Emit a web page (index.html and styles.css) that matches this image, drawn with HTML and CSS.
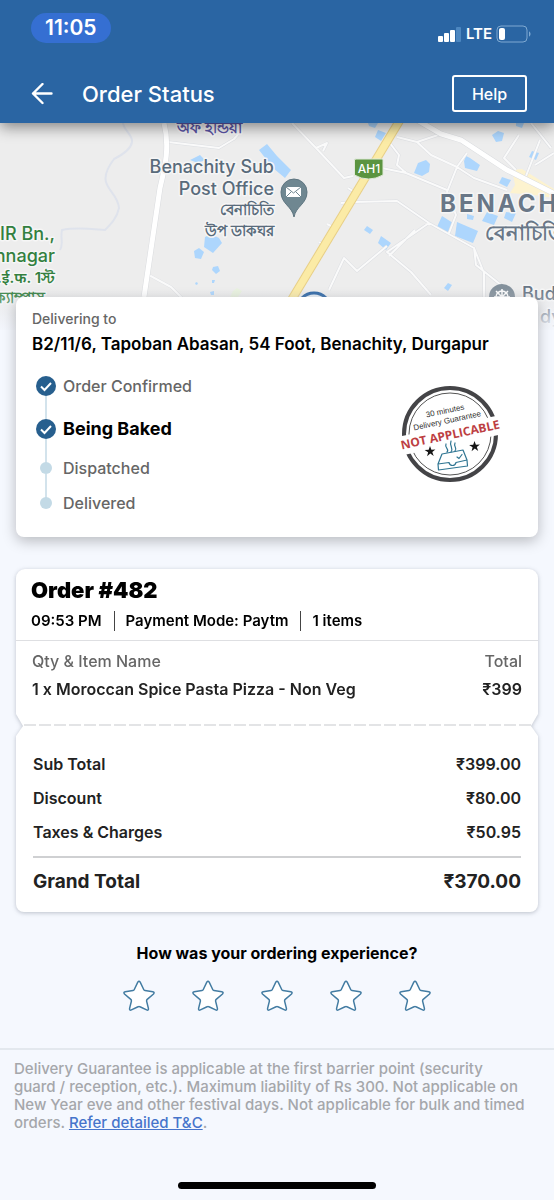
FILE: index.html
```html
<!DOCTYPE html>
<html lang="en">
<head>
<meta charset="utf-8">
<meta name="viewport" content="width=device-width, initial-scale=1">
<title>Order Status</title>
<link rel="stylesheet" href="styles.css">
</head>
<body>
<header class="top">
  <div class="status-bar">
    <span class="clock">11:05</span>
    <div class="signals">
      <svg width="24" height="18" viewBox="0 0 24 18" aria-hidden="true">
        <g fill="#fff"><rect x="0" y="11" width="5" height="6" rx="1"/><rect x="6" y="8" width="5" height="9" rx="1"/><rect x="12" y="5" width="5" height="12" rx="1"/></g>
        <rect x="18" y="2" width="5" height="15" rx="1" fill="#4d87c0"/>
      </svg>
      <span class="network">LTE</span>
      <svg width="35" height="18" viewBox="0 0 35 18" aria-hidden="true">
        <rect x="1" y="1" width="30" height="16" rx="4" fill="none" stroke="#7ea9d2" stroke-width="1"/>
        <rect x="3" y="3" width="6" height="12" rx="2" fill="#fff"/>
        <path d="M33 6.500v5c2-.5 2-4.500 0-5z" fill="#7ea9d2"/>
      </svg>
    </div>
  </div>
  <div class="app-bar">
    <button class="back" type="button" aria-label="Back">
      <svg width="22" height="22" viewBox="0 0 22 22" fill="none" stroke="#fff" stroke-width="2.400" stroke-linecap="round" stroke-linejoin="round"><path d="M20.500 10.500H2M11.500 1 2 10.500l9.500 9.500"/></svg>
    </button>
    <h1 class="title">Order Status</h1>
    <button class="help" type="button">Help</button>
  </div>
</header>

<main>
  <div class="map">
    <svg class="map-art" viewBox="0 123 554 207" preserveAspectRatio="xMidYMin slice" aria-label="Map of Benachity" role="img">
      <rect x="-600" y="100" width="1800" height="300" fill="#ededed"/>
      <g class="road-faint">
        <path d="M123 123c1 8 10 12 9 19s-8 12-18 17c-6 8-10 16-8 23 3 10 12 14 13 26-2 10-8 16-14 22-14-1-28-3-43 0-2 8 2 14-2 20"/>
      </g>
      <g class="water">
        <path d="M259 150l8-6 10 12 14 14-6 8-12-10zM190 160l10-5 5 5-7 3zM205 237l6-3 8 4 3 5-9 10-9-6zM194 251l5-3 5 4-3 7-6-1zM213 267l5-1 2 5-4 3-4-4zM196 282l2 1-1 2-2-1zM212 280l3 0-1 3-2 0zM210 292l4-1 0 4-3 0z"/>
        <path d="M368 123h10l-3 5-6-2zM378 130l8 3-5 8-6-4zM418 163l8-3 4 4-1 8-7 4-8-3zM466 156l4 2 10 7-3 6-12-3-1-7zM498 131l6 2-2 8-6 1-4-7zM516 123h8l-2 5-6-2zM532 151l7 2-3 7-7-3zM502 177l9 3-4 7-8-4zM442 216l11 7-3 11-13-7zM457 222l21 9-5 12-18-7zM487 212l11 4-4 9-12-4zM467 214l7 2-1 4-6-1zM506 212l10 1-4 9-8-4zM367 226l6 4-3 4-6-4zM381 236l10 7-5 7-8-7zM448 283l4 2-4 6-4-3z"/>
      </g>
      <path fill="#e9f2df" d="M233 291l4-3 5 3-4 6h-8z"/>
      <path fill="#fdf3cf" d="M512 170l10-1 32 20v9l-20-3-24-2 5-8z"/>
      <g class="road-edge"><path d="M292 123l24 25 13 14 15 16 9-2M316 148l11-5-4 8M397 137l20 5 14 13 26 12 17 11 33 12M389 142l10 13-2 10 9 8 41 17M382 168l24 5M354 202l43-1 32 22 45 25 2 17 25 20M429 223l-42 29 24 20 20 23M387 246l-30 25-13-13-15 32M467 153l-10 14-10 25 9 23-7 18M474 248l10 25v24M531 123l20 25M519 135l-15 23 12 12M540 140l-14 36M417 142l24-8M168 142l51 6 15-9 6-7M147 274l24 13 12 12M415 230l-26 26M341 203l13-1M348 188l8 5M327 224l8 4M319 242l7 4M535 165l19-12"/></g>
      <g class="road-line"><path d="M292 123l24 25 13 14 15 16 9-2M316 148l11-5-4 8M397 137l20 5 14 13 26 12 17 11 33 12M389 142l10 13-2 10 9 8 41 17M382 168l24 5M354 202l43-1 32 22 45 25 2 17 25 20M429 223l-42 29 24 20 20 23M387 246l-30 25-13-13-15 32M467 153l-10 14-10 25 9 23-7 18M474 248l10 25v24M531 123l20 25M519 135l-15 23 12 12M540 140l-14 36M417 142l24-8M168 142l51 6 15-9 6-7M147 274l24 13 12 12M415 230l-26 26M341 203l13-1M348 188l8 5M327 224l8 4M319 242l7 4M535 165l19-12"/></g>
      <path class="road-main-edge" d="M164 123c6 24 1 44-4 65l-16 109M417 120l24 14 20 6 46 30 60 30"/>
      <path class="road-main" d="M164 123c6 24 1 44-4 65l-16 109M417 120l24 14 20 6 46 30 60 30"/>
      <path d="M403 115L286 309" fill="none" stroke="#e8cf86" stroke-width="9"/>
      <path d="M403 115L286 309" fill="none" stroke="#fbeba6" stroke-width="7"/>
      <path d="M355 159h27q1 0 1 1v15q-7 4-14.500 4t-14-4v-15q0-1 1-1z" fill="#5b9440" stroke="#dfe9d8"/>
      <text x="369" y="173" class="shield">AH1</text>
      <path d="M294 217c-2-11-13-13-13-25a13 13 0 0 1 26 0c0 12-11 14-13 25z" fill="#6f8791" stroke="#5f7681"/>
      <path d="M286 187h15v10h-15z" fill="#fff"/>
      <path d="M286 187l7.500 6 7.500-6M286 197l5-5M301 197l-5-5" fill="none" stroke="#6f8791"/>
      <circle cx="502" cy="297" r="13" fill="#84919c"/>
      <g fill="none" stroke="#fff" stroke-width="1.500"><circle cx="502" cy="297" r="6"/><path d="M494 297h16M502 289v16M496 291l12 12M508 291l-12 12"/></g>
      <circle cx="314" cy="310" r="17" fill="#e8f0f7" stroke="#2b65a5" stroke-width="3"/>
      <g class="label" text-anchor="end">
        <text x="242" y="133" class="label-small" fill="#5b55a6">অফ ইন্ডিয়া</text>
        <g fill="#596b7b">
          <text x="274" y="173" class="label-big">Benachity Sub</text>
          <text x="274" y="195" class="label-big">Post Office</text>
          <text x="274" y="215" class="label-small">বেনাচিতি</text>
          <text x="274" y="236" class="label-small">উপ ডাকঘর</text>
        </g>
        <g fill="#33803f">
          <text x="55" y="240" class="label-big">IR Bn.,</text>
          <text x="55" y="262" class="label-big">nnagar</text>
          <text x="55" y="283" class="label-small">फ.ई.फ. 1স্ট</text>
          <text x="45" y="303" class="label-small">ক্যাম্পাস</text>
        </g>
      </g>
      <g class="label" fill="#697787">
        <text x="440" y="212" class="label-town">BENACHITY</text>
        <text x="485" y="240" class="label-local">বেনাচিতি</text>
        <text x="522" y="300" class="label-big">Buddha</text>
        <text x="540" y="323" class="label-big">dyalaya</text>
      </g>
    </svg>
  </div>

  <section class="card delivery">
    <p class="muted">Delivering to</p>
    <p class="address">B2/11/6, Tapoban Abasan, 54 Foot, Benachity, Durgapur</p>
    <div class="progress">
      <ol class="steps">
        <li class="step step-done"><span class="mark"><svg viewBox="0 0 20 20" width="20" height="20"><circle cx="10" cy="10" r="10" fill="#275f8e"/><path d="M5 10.500l3.500 3.500L15 7" fill="none" stroke="#fff" stroke-width="2"/></svg></span>Order Confirmed</li>
        <li class="step step-done step-current"><span class="mark"><svg viewBox="0 0 20 20" width="20" height="20"><circle cx="10" cy="10" r="10" fill="#275f8e"/><path d="M5 10.500l3.500 3.500L15 7" fill="none" stroke="#fff" stroke-width="2"/></svg></span>Being Baked</li>
        <li class="step step-next"><span class="mark"><span class="dot"></span></span>Dispatched</li>
        <li class="step step-next"><span class="mark"><span class="dot"></span></span>Delivered</li>
      </ol>
      <svg class="stamp" width="100" height="100" viewBox="0 0 100 100" role="img" aria-label="30 minutes delivery guarantee not applicable">
        <circle cx="50" cy="50" r="46" fill="none" stroke="#444447" stroke-width="4"/>
        <circle cx="50" cy="50" r="41" fill="none" stroke="#555" stroke-width="1"/>
        <g transform="rotate(-12 50 50)">
          <rect x="-2" y="42" width="104" height="19" fill="#fff"/>
          <text x="50" y="29" class="stamp-small">30 minutes</text>
          <text x="50" y="39" class="stamp-small">Delivery Guarantee</text>
          <text x="50" y="55" class="stamp-big">NOT APPLICABLE</text>
        </g>
        <g fill="#161616"><path d="M30 62l1.400 3.700 4-.2-3.100 2.500 1.400 3.900-3.400-2.300-3.200 2.600 1-4-3.500-2.100 4.100-.3z"/><path d="M74.500 57l1.400 3.700 4-.2-3.100 2.500 1.400 3.900-3.400-2.300-3.200 2.600 1-4-3.500-2.100 4.100-.3z"/></g>
        <g fill="none" stroke="#2f7592" stroke-width="1.200" stroke-linejoin="round" stroke-linecap="round">
          <path d="M42 70l21-4 4 10 .5 6-29 4-.5-6zM38 80l11-1.500c1 4 6 4 7 0L67 76M57 73l2 1.500 3-4"/>
          <path d="M47 68c3-3-3-4-1-8M51 68c3-4-2-6 0-11M55 67c3-3-2-4 0-8"/>
        </g>
      </svg>
    </div>
  </section>

  <section class="ticket">
    <div class="stub">
      <div class="stub-body">
        <div class="order-head">
          <h2 class="order-number">Order #482</h2>
          <p class="facts"><span>09:53 PM</span><span>Payment Mode: Paytm</span><span>1 items</span></p>
        </div>
        <table class="items">
          <thead><tr><th scope="col">Qty &amp; Item Name</th><th scope="col">Total</th></tr></thead>
          <tbody><tr><td>1 x Moroccan Spice Pasta Pizza - Non Veg</td><td>₹399</td></tr></tbody>
        </table>
      </div>
    </div>
    <div class="bill">
      <div class="bill-body">
        <table class="totals">
          <tbody>
            <tr><th scope="row">Sub Total</th><td>₹399.00</td></tr>
            <tr><th scope="row">Discount</th><td>₹80.00</td></tr>
            <tr><th scope="row">Taxes &amp; Charges</th><td>₹50.95</td></tr>
          </tbody>
          <tfoot><tr><th scope="row">Grand Total</th><td>₹370.00</td></tr></tfoot>
        </table>
      </div>
    </div>
  </section>

  <section class="rating">
    <h2 class="question">How was your ordering experience?</h2>
    <div class="stars">
      <button type="button" class="star" aria-label="1 star"><svg viewBox="0 0 34 32" width="34" height="32"><path d="M15.800 2.200q1.200-2 2.400 0L21.700 9.500q.4.900 1.300 1l7.800 1.200q2.200.5.700 2.300l-6.300 5.400q-.8.700-.6 1.700l1.800 7.300q.3 2.500-1.800 1.500L18 26.800q-1-.5-2 0l-6.600 3.100q-2.100 1-1.800-1.500l1.800-7.300q.2-1-.6-1.700L2.500 14q-1.500-1.800.7-2.300L11 10.500q.9-.1 1.300-1z"/></svg></button>
      <button type="button" class="star" aria-label="2 stars"><svg viewBox="0 0 34 32" width="34" height="32"><path d="M15.800 2.200q1.200-2 2.400 0L21.700 9.500q.4.900 1.300 1l7.800 1.200q2.200.5.700 2.300l-6.300 5.400q-.8.700-.6 1.700l1.800 7.300q.3 2.500-1.800 1.500L18 26.800q-1-.5-2 0l-6.600 3.100q-2.100 1-1.800-1.500l1.800-7.300q.2-1-.6-1.700L2.500 14q-1.500-1.800.7-2.300L11 10.500q.9-.1 1.300-1z"/></svg></button>
      <button type="button" class="star" aria-label="3 stars"><svg viewBox="0 0 34 32" width="34" height="32"><path d="M15.800 2.200q1.200-2 2.400 0L21.700 9.500q.4.900 1.300 1l7.800 1.200q2.200.5.700 2.300l-6.300 5.400q-.8.700-.6 1.700l1.800 7.300q.3 2.500-1.800 1.500L18 26.800q-1-.5-2 0l-6.600 3.100q-2.100 1-1.800-1.500l1.800-7.300q.2-1-.6-1.700L2.500 14q-1.500-1.800.7-2.300L11 10.500q.9-.1 1.300-1z"/></svg></button>
      <button type="button" class="star" aria-label="4 stars"><svg viewBox="0 0 34 32" width="34" height="32"><path d="M15.800 2.200q1.200-2 2.400 0L21.700 9.500q.4.900 1.300 1l7.800 1.200q2.200.5.700 2.300l-6.300 5.400q-.8.700-.6 1.700l1.800 7.300q.3 2.500-1.800 1.500L18 26.800q-1-.5-2 0l-6.600 3.100q-2.100 1-1.800-1.500l1.800-7.300q.2-1-.6-1.700L2.500 14q-1.500-1.800.7-2.300L11 10.500q.9-.1 1.300-1z"/></svg></button>
      <button type="button" class="star" aria-label="5 stars"><svg viewBox="0 0 34 32" width="34" height="32"><path d="M15.800 2.200q1.200-2 2.400 0L21.700 9.500q.4.900 1.300 1l7.800 1.200q2.200.5.700 2.300l-6.300 5.400q-.8.700-.6 1.700l1.800 7.300q.3 2.500-1.800 1.500L18 26.800q-1-.5-2 0l-6.600 3.100q-2.100 1-1.800-1.500l1.800-7.300q.2-1-.6-1.700L2.500 14q-1.500-1.800.7-2.300L11 10.500q.9-.1 1.300-1z"/></svg></button>
    </div>
  </section>
</main>

<footer class="terms">
  <p class="terms-text">Delivery Guarantee is applicable at the first barrier point (security guard&nbsp;/ reception, etc.). Maximum liability of Rs 300. Not applicable on New Year eve and other festival days. Not applicable for bulk and timed orders. <a href="#terms">Refer detailed T&amp;C</a>.</p>
  <div class="home-indicator"></div>
</footer>
</body>
</html>
```

FILE: styles.css
```css
* { box-sizing: border-box; }

body {
  margin: 0;
  min-height: 100vh;
  display: flex;
  flex-direction: column;
  background: #f5f8fe;
  color: #000;
  font-family: Inter, "Noto Sans", sans-serif;
  font-size: 16px;
  font-weight: 500;
  line-height: 20px;
}

h1, h2, p, ol { margin: 0; padding: 0; }
button { font: inherit; color: inherit; background: none; border: 0; padding: 0; cursor: pointer; }
svg { display: block; flex: none; }

/* Header */
.top {
  position: relative;
  z-index: 1;
  background: #2a65a3;
  color: #fff;
  box-shadow: 0 4px 14px rgba(0, 0, 0, .45);
}
.status-bar {
  display: flex;
  justify-content: space-between;
  align-items: flex-start;
  padding: 13px 23px 0 31px;
  height: 64px;
}
.clock {
  padding: 5px 14px;
  border-radius: 15px;
  background: #356fd2;
  font-size: 21px;
  font-weight: 600;
}
.signals { display: flex; align-items: center; gap: 4px; padding-top: 12px; }
.network { font-size: 15px; font-weight: 600; line-height: 18px; }
.app-bar {
  display: flex;
  align-items: center;
  padding: 11px 27px 11px 31px;
}
.title { flex: 1; margin-left: 29px; font-size: 22px; font-weight: 500; line-height: 28px; }
.help {
  width: 75px;
  height: 37px;
  border: 2px solid #fff;
  border-radius: 3px;
  font-size: 16px;
}

/* Map */
.map { position: relative; height: 207px; overflow: hidden; }
.map-art { width: 100%; height: 100%; }
.map::after {
  content: "";
  position: absolute;
  inset: auto 0 0;
  height: 42px;
  background: linear-gradient(rgba(238, 240, 245, 0), rgba(240, 243, 250, .5) 60%, #f3f6fc);
}
.road-faint { fill: none; stroke: #dfe3ec; stroke-width: 2; }
.water { fill: #add6fd; }
.road-edge { fill: none; stroke: #dcdee2; stroke-width: 3; stroke-linejoin: round; }
.road-line { fill: none; stroke: #fafafa; stroke-width: 2; stroke-linejoin: round; }
.road-main-edge { fill: none; stroke: #dadcdf; stroke-width: 6; }
.road-main { fill: none; stroke: #fff; stroke-width: 5; }
.label text { stroke: #f6f6f6; stroke-width: 3px; stroke-linejoin: round; paint-order: stroke; }
.label-big { font-size: 18px; }
.label-small { font-size: 15px; font-weight: 600; }
.label-local { font-size: 21px; font-weight: 600; }
.label-town { font-size: 24px; font-weight: 700; letter-spacing: 3px; }
.shield { fill: #fff; font-size: 12px; text-anchor: middle; }

/* Delivery card */
.card {
  position: relative;
  margin: -33px 16px 0;
  padding: 12px 16px 15px;
  background: #fff;
  border-radius: 8px;
  box-shadow: 0 4px 14px rgba(0, 0, 0, .25);
}
.muted { color: #666; font-size: 14px; }
.address { margin-top: 5px; font-size: 17px; font-weight: 600; }
.progress {
  display: flex;
  justify-content: space-between;
  align-items: flex-start;
  padding: 22px 22px 0 4px;
}
.steps { list-style: none; }
.step {
  position: relative;
  display: flex;
  align-items: flex-start;
  gap: 7px;
  color: #666;
}
.step-done { height: 43px; }
.step-current { height: 36px; color: #000; font-size: 18px; font-weight: 700; }
.step-next { margin-top: 3px; height: 32px; }
.step:last-child { height: 29px; }
.mark { display: flex; width: 20px; height: 20px; align-items: center; justify-content: center; }
.step:not(:last-child)::after {
  content: "";
  position: absolute;
  left: 9px;
  top: 20px;
  bottom: 0;
  width: 2px;
  background: #d3e3ec;
}
.step-current:not(:last-child)::after { bottom: -8px; }
.step-next:not(:last-child)::after { top: 16px; bottom: -8px; }
.dot { width: 12px; height: 12px; border-radius: 50%; background: #c3dae6; }
.stamp { margin-top: 8px; overflow: visible; }
.stamp-small { font: 8px "Liberation Sans", sans-serif; fill: #333; text-anchor: middle; }
.stamp-big { font: 700 12px "Open Sans", sans-serif; fill: #bd3f43; text-anchor: middle; }

/* Ticket */
.ticket {
  margin: 32px 16px 0;
  filter: drop-shadow(0 1px 2px rgba(40, 50, 70, .28));
}
.stub {
  clip-path: polygon(0 0, 100% 0, 100% calc(100% - 12px), calc(100% - 7px) 100%, 7px 100%, 0 calc(100% - 12px));
}
.stub-body {
  background: #fff;
  border-radius: 9px 9px 0 0;
  border-bottom: 2px solid transparent;
  padding-bottom: 21px;
  background-image: repeating-linear-gradient(90deg, #e3e4e6 0 12px, #fff 12px 15px);
  background-size: 100% 2px;
  background-repeat: no-repeat;
  background-position: 8px 100%;
  background-origin: border-box;
}
.order-head { padding: 9px 15px 9px; border-bottom: 1px solid #dedfe2; }
.order-number { font-size: 22px; font-weight: 900; line-height: 24px; }
.facts { display: flex; margin-top: 9px; font-size: 15px; font-weight: 600; }
.facts span + span { margin-left: 12px; padding-left: 11px; border-left: 1px solid #444; }
table { width: 100%; border-collapse: collapse; }
th { text-align: left; font-weight: 500; padding: 0; }
td { padding: 0; }
th:nth-child(2), td:last-child { text-align: right; }
.stub-body .items { width: calc(100% - 32px); margin: 6px 16px 0; color: #222; }
.items th { color: #666; height: 28px; }
.items td { height: 28px; font-weight: 600; }
.bill {
  clip-path: polygon(7px 0, calc(100% - 7px) 0, 100% 10px, 100% 100%, 0 100%, 0 10px);
}
.bill-body { background: #fff; border-radius: 0 0 8px 8px; padding: 21px 17px 7px; }
.totals { color: #222; }
.totals tbody th, .totals tbody td { height: 34px; font-weight: 600; }
.totals tbody tr:last-child > * { height: 42px; padding-bottom: 8px; }
.totals tfoot th, .totals tfoot td { height: 48px; font-size: 19px; font-weight: 700; }
.totals tfoot { border-top: 2px solid #cfd0d2; }

/* Rating */
.rating { padding: 31px 16px 36px; text-align: center; }
.question { font-size: 16px; font-weight: 700; line-height: 20px; }
.stars { display: flex; justify-content: center; gap: 35px; margin-top: 17px; }
.star svg { fill: #fff; stroke: #437ca2; stroke-width: 1.500; }

/* Footer */
.terms {
  flex: 1;
  display: flex;
  flex-direction: column;
  justify-content: space-between;
  align-items: center;
  padding: 10px 14px 11px;
  border-top: 2px solid #e3e8ee;
}
.terms-text { align-self: stretch; padding-right: 6px; color: #a5a7ab; font-size: 15px; line-height: 18px; }
.terms a { color: #4674cb; }
.home-indicator { width: 198px; height: 7px; border-radius: 4px; background: #000; }
```
